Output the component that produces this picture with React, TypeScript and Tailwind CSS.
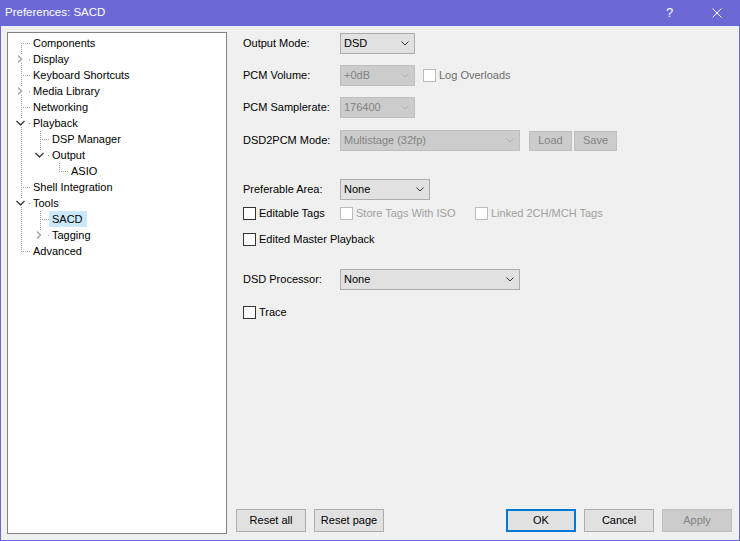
import React from "react";

type Node = {
  label: string;
  depth: number;
  anc: boolean[];
  first?: boolean;
  hasNext: boolean;
  exp?: "open" | "closed";
  selected?: boolean;
};

const nodes: Node[] = [
  { label: "Components", depth: 0, anc: [], first: true, hasNext: true },
  { label: "Display", depth: 0, anc: [], hasNext: true, exp: "closed" },
  { label: "Keyboard Shortcuts", depth: 0, anc: [], hasNext: true },
  { label: "Media Library", depth: 0, anc: [], hasNext: true, exp: "closed" },
  { label: "Networking", depth: 0, anc: [], hasNext: true },
  { label: "Playback", depth: 0, anc: [], hasNext: true, exp: "open" },
  { label: "DSP Manager", depth: 1, anc: [true], hasNext: true },
  { label: "Output", depth: 1, anc: [true], hasNext: false, exp: "open" },
  { label: "ASIO", depth: 2, anc: [true, false], hasNext: false },
  { label: "Shell Integration", depth: 0, anc: [], hasNext: true },
  { label: "Tools", depth: 0, anc: [], hasNext: true, exp: "open" },
  { label: "SACD", depth: 1, anc: [true], hasNext: true, selected: true },
  { label: "Tagging", depth: 1, anc: [true], hasNext: false, exp: "closed" },
  { label: "Advanced", depth: 0, anc: [], hasNext: false },
];

const LINE = "#a0a0a0";

function AncCell({ cont }: { cont: boolean }) {
  return (
    <svg width="19" height="16" className="shrink-0">
      {cont && <line x1="13.5" y1="0" x2="13.5" y2="16" stroke={LINE} strokeDasharray="1 1" />}
    </svg>
  );
}

function OwnCell({ n }: { n: Node }) {
  const hasExp = !!n.exp;
  return (
    <svg width="22" height="16" className="shrink-0">
      {!n.first && (
        <line x1="13.5" y1="0" x2="13.5" y2={hasExp ? 4 : 8} stroke={LINE} strokeDasharray="1 1" />
      )}
      {n.hasNext && (
        <line x1="13.5" y1={hasExp ? 12 : 8} x2="13.5" y2="16" stroke={LINE} strokeDasharray="1 1" />
      )}
      {hasExp ? (
        <rect x="21" y="8" width="1" height="1" fill={LINE} />
      ) : (
        <line x1="13" y1="8.5" x2="22" y2="8.5" stroke={LINE} strokeDasharray="1 1" />
      )}
      {n.exp === "closed" && (
        <polyline points="10,4.5 13.5,8 10,11.5" fill="none" stroke="#a6a6a6" strokeWidth="1.5" />
      )}
      {n.exp === "open" && (
        <polyline points="8.5,6 12.5,10 16.5,6" fill="none" stroke="#404040" strokeWidth="1.5" />
      )}
    </svg>
  );
}

function Tree() {
  return (
    <div className="ml-[6px] mt-[6px] h-[502px] w-[220px] shrink-0 border border-[#828282] bg-white pt-[2px]">
      {nodes.map((n) => (
        <div key={n.label} className="flex h-[16px] items-center">
          {n.anc.map((c, i) => (
            <AncCell key={i} cont={c} />
          ))}
          <OwnCell n={n} />
          <span
            className={`flex h-[16px] items-center whitespace-nowrap pl-[3px] pr-[4px] ${
              n.selected ? "bg-[#cce8ff]" : ""
            }`}
          >
            {n.label}
          </span>
        </div>
      ))}
    </div>
  );
}

function Chevron({ disabled }: { disabled?: boolean }) {
  return (
    <svg width="8" height="5" className="shrink-0">
      <polyline
        points="0.5,0.5 4,4 7.5,0.5"
        fill="none"
        stroke={disabled ? "#b0b0b0" : "#333333"}
        strokeWidth="1"
      />
    </svg>
  );
}

function Select({ value, disabled, cls }: { value: string; disabled?: boolean; cls: string }) {
  return (
    <div
      className={`flex h-[21px] shrink-0 items-center justify-between border pl-[3px] pr-[5px] ${cls} ${
        disabled ? "border-[#bfbfbf] bg-[#cccccc] text-[#838383]" : "border-[#adadad] bg-[#e1e1e1] text-black"
      }`}
    >
      <span>{value}</span>
      <Chevron disabled={disabled} />
    </div>
  );
}

function Check({ label, disabled, textCls }: { label: string; disabled?: boolean; textCls?: string }) {
  return (
    <div className="flex items-center">
      <div
        className={`h-[13px] w-[13px] shrink-0 border bg-white ${
          disabled ? "border-[#bcbcbc]" : "border-[#333333]"
        }`}
      />
      <span className={`ml-[3px] whitespace-nowrap ${textCls ?? (disabled ? "text-[#a0a0a0]" : "text-black")}`}>
        {label}
      </span>
    </div>
  );
}

function Btn({ label, kind }: { label: string; kind?: "default" | "disabled" }) {
  const c =
    kind === "default"
      ? "border-2 border-[#0078d7] bg-[#e1e1e1] text-black"
      : kind === "disabled"
      ? "border border-[#bfbfbf] bg-[#cccccc] text-[#838383]"
      : "border border-[#adadad] bg-[#e1e1e1] text-black";
  return <div className={`flex h-[23px] w-[70px] items-center justify-center ${c}`}>{label}</div>;
}

function Row({ label, children, cls }: { label: string; children: React.ReactNode; cls: string }) {
  return (
    <div className={`flex h-[21px] items-center ${cls}`}>
      <div className="w-[97px] shrink-0 whitespace-nowrap">{label}</div>
      {children}
    </div>
  );
}

export default function App() {
  return (
    <div className="flex h-[541px] w-[740px] flex-col bg-[#f0f0f0] font-['Liberation_Sans',Arial,sans-serif] text-[11px] text-black">
      <div className="flex h-[26px] shrink-0 items-center bg-[#6b69d6] text-white">
        <span className="pl-[5px] text-[11.5px]">Preferences: SACD</span>
        <div className="ml-auto flex h-full">
          <div className="flex h-full w-[46px] items-center justify-center pr-[3px] text-[13px]">?</div>
          <div className="flex h-full w-[46px] items-center justify-center">
            <svg width="10" height="10">
              <line x1="0.5" y1="0.5" x2="9.5" y2="9.5" stroke="white" strokeWidth="1" />
              <line x1="9.5" y1="0.5" x2="0.5" y2="9.5" stroke="white" strokeWidth="1" />
            </svg>
          </div>
        </div>
      </div>
      <div className="flex flex-1 border-x border-b border-[#6b69d6]">
        <Tree />
        <div className="flex flex-1 flex-col">
          <div className="flex flex-col pl-[16px] pt-[7px]">
            <Row label="Output Mode:" cls="">
              <Select value="DSD" cls="w-[75px]" />
            </Row>
            <Row label="PCM Volume:" cls="mt-[11px]">
              <Select value="+0dB" disabled cls="w-[75px]" />
              <div className="ml-[8px]">
                <Check label="Log Overloads" disabled textCls="text-[#6d6d6d]" />
              </div>
            </Row>
            <Row label="PCM Samplerate:" cls="mt-[11px]">
              <Select value="176400" disabled cls="w-[75px]" />
            </Row>
            <Row label="DSD2PCM Mode:" cls="mt-[12px]">
              <Select value="Multistage (32fp)" disabled cls="w-[180px]" />
              <div className="ml-[9px] flex h-[20px] w-[43px] items-center justify-center border border-[#bfbfbf] bg-[#cccccc] text-[#838383]">
                Load
              </div>
              <div className="ml-[2px] flex h-[20px] w-[43px] items-center justify-center border border-[#bfbfbf] bg-[#cccccc] text-[#838383]">
                Save
              </div>
            </Row>
            <Row label="Preferable Area:" cls="mt-[28px]">
              <Select value="None" cls="w-[90px]" />
            </Row>
            <div className="mt-[3px] flex h-[21px] items-center">
              <div className="w-[97px] shrink-0">
                <Check label="Editable Tags" />
              </div>
              <div className="w-[135px] shrink-0">
                <Check label="Store Tags With ISO" disabled />
              </div>
              <Check label="Linked 2CH/MCH Tags" disabled />
            </div>
            <div className="mt-[5px] flex h-[21px] items-center">
              <Check label="Edited Master Playback" />
            </div>
            <Row label="DSD Processor:" cls="mt-[19px]">
              <Select value="None" cls="w-[180px]" />
            </Row>
            <div className="mt-[12px] flex h-[21px] items-center">
              <Check label="Trace" />
            </div>
          </div>
          <div className="mt-auto flex pb-[8px] pl-[9px] pr-[7px]">
            <Btn label="Reset all" />
            <div className="ml-[8px]">
              <Btn label="Reset page" />
            </div>
            <div className="ml-auto">
              <Btn label="OK" kind="default" />
            </div>
            <div className="ml-[8px]">
              <Btn label="Cancel" />
            </div>
            <div className="ml-[8px]">
              <Btn label="Apply" kind="disabled" />
            </div>
          </div>
        </div>
      </div>
    </div>
  );
}
